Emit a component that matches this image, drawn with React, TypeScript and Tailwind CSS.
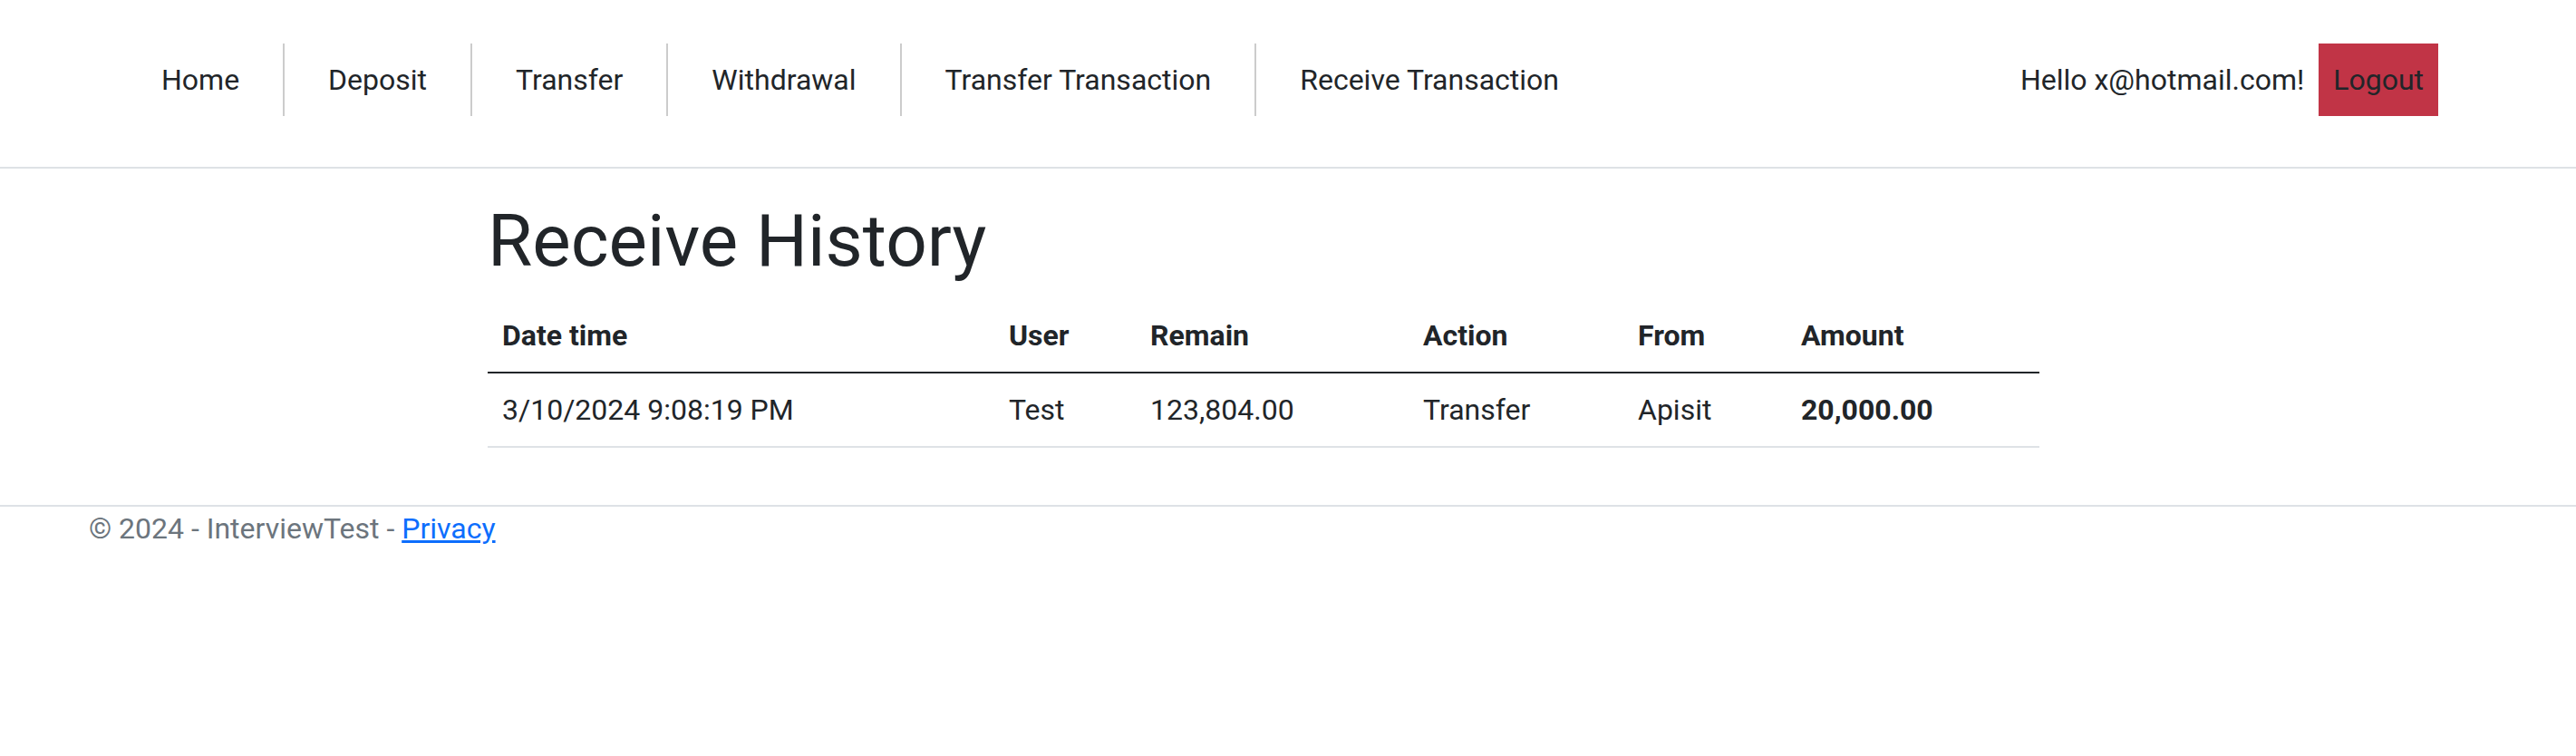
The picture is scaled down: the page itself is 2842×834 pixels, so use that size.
import React from "react";

const links = ["Home", "Deposit", "Transfer", "Withdrawal", "Transfer Transaction", "Receive Transaction"];

export default function App() {
  return (
    <div className="min-h-[834px] bg-white text-[#212529] font-['Roboto','Noto_Sans',sans-serif] text-[32px] leading-[48px]">
      <header className="border-b-2 border-[#dee2e6]">
        <nav className="flex items-center justify-between pl-[130px] pr-[152px] pt-[48px] pb-[56px]">
          <ul className="flex">
            {links.map((l, i) => (
              <li key={l} className={i < links.length - 1 ? "border-r-2 border-[#cccccc]" : ""}>
                <a className="block px-[48px] py-[16px] text-[#212529]">{l}</a>
              </li>
            ))}
          </ul>
          <div className="flex items-center">
            <span className="block px-[16px] py-[16px]">Hello x@hotmail.com!</span>
            <button className="block bg-[#c13446] px-[16px] py-[16px] leading-[48px] text-[#212529]">Logout</button>
          </div>
        </nav>
      </header>
      <main className="mt-[32px] ml-[538px] w-[1712px]">
        <h1 className="text-[80px] leading-[96px] font-normal mb-[16px]">Receive History</h1>
        <table className="w-full table-fixed border-collapse">
          <colgroup>
            <col className="w-[559px]" />
            <col className="w-[156px]" />
            <col className="w-[301px]" />
            <col className="w-[237px]" />
            <col className="w-[180px]" />
            <col />
          </colgroup>
          <thead>
            <tr>
              {["Date time", "User", "Remain", "Action", "From", "Amount"].map((h) => (
                <th key={h} className="text-left font-bold px-[16px] py-[16px] border-b-2 border-[#212529]">
                  {h}
                </th>
              ))}
            </tr>
          </thead>
          <tbody>
            <tr>
              <td className="px-[16px] py-[16px] border-b-2 border-[#dee2e6]">3/10/2024 9:08:19 PM</td>
              <td className="px-[16px] py-[16px] border-b-2 border-[#dee2e6]">Test</td>
              <td className="px-[16px] py-[16px] border-b-2 border-[#dee2e6]">123,804.00</td>
              <td className="px-[16px] py-[16px] border-b-2 border-[#dee2e6]">Transfer</td>
              <td className="px-[16px] py-[16px] border-b-2 border-[#dee2e6]">Apisit</td>
              <td className="px-[16px] py-[16px] border-b-2 border-[#dee2e6] font-bold">20,000.00</td>
            </tr>
          </tbody>
        </table>
      </main>
      <footer className="mt-[63px] border-t-2 border-[#dee2e6] text-[#6c757d]">
        <div className="pl-[98px] leading-[48px]">
          © 2024 - InterviewTest - <a className="text-[#0d6efd] underline">Privacy</a>
        </div>
      </footer>
    </div>
  );
}
